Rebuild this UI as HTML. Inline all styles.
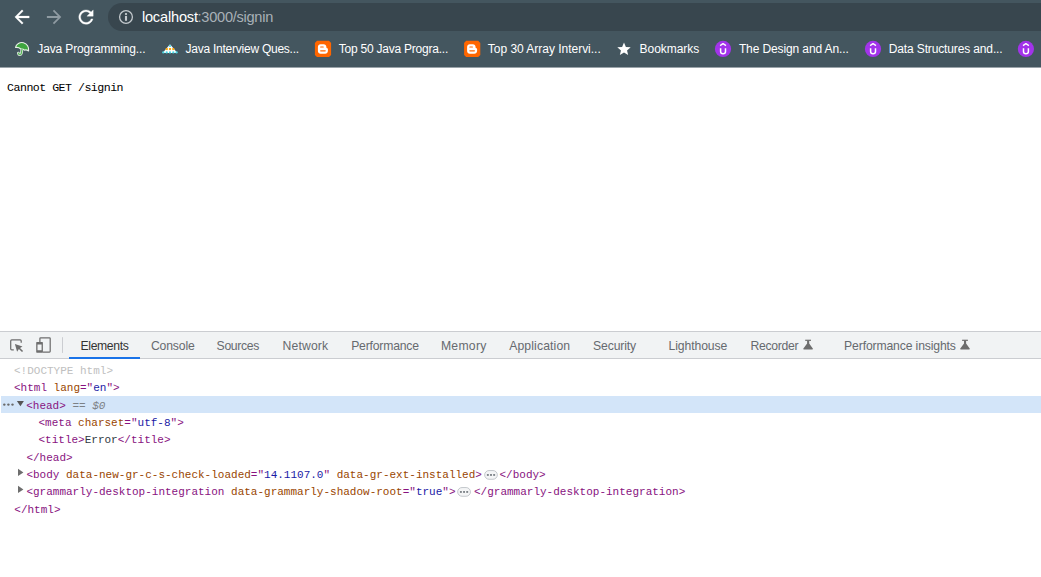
<!DOCTYPE html>
<html lang="en">
<head>
<meta charset="utf-8">
<title>Error</title>
<style>
html,body{margin:0;padding:0;background:#fff;}
body{width:1041px;height:577px;position:relative;overflow:hidden;font-family:"Liberation Sans",sans-serif;}
.abs{position:absolute;}
.t{position:absolute;white-space:pre;height:16px;line-height:16px;font-family:"Liberation Sans",sans-serif;}
.m{position:absolute;white-space:pre;height:16px;line-height:16px;font-family:"Liberation Mono",monospace;font-size:11px;}
#chrome{position:absolute;left:0;top:0;width:1041px;height:67px;background:#44565f;}
#chromeline{position:absolute;left:0;top:67px;width:1041px;height:1px;background:#9aa3a9;}
#omni{position:absolute;left:108px;top:3px;width:960px;height:28px;border-radius:14px;background:#38464e;}
#pagetext{position:absolute;left:7.1px;top:80.1px;height:16px;line-height:16px;white-space:pre;font-family:"Liberation Mono",monospace;font-size:11.6px;letter-spacing:-0.517px;color:#000;}
#dtborder{position:absolute;left:0;top:331px;width:1041px;height:1px;background:#cbcdd1;}
#dttabs{position:absolute;left:0;top:332px;width:1041px;height:26px;background:#f1f3f4;}
#dttabsline{position:absolute;left:0;top:358px;width:1041px;height:1px;background:#cbcdd1;}
#tabsel{position:absolute;left:69px;top:357px;width:71px;height:2px;background:#1a73e8;}
#rowsel{position:absolute;left:1px;top:396px;width:1040px;height:17px;background:#d3e5f9;}
svg{position:absolute;left:0;top:0;overflow:visible;}
</style>
</head>
<body>
<div id="chrome"></div>
<div id="chromeline"></div>
<div id="omni"></div>
<div id="pagetext">Cannot GET /signin</div>
<div id="dtborder"></div>
<div id="dttabs"></div>
<div id="dttabsline"></div>
<div id="tabsel"></div>
<div id="rowsel"></div>

<svg width="1041" height="577" viewBox="0 0 1041 577">
  <!-- nav icons -->
  <g transform="translate(11.2,6.2) scale(0.9)" fill="#ffffff" stroke="#ffffff" stroke-width="0.3"><path d="M20 11H7.83l5.59-5.59L12 4l-8 8 8 8 1.41-1.41L7.83 13H20v-2z"/></g>
  <g transform="translate(43.3,6.2) scale(0.9)" fill="#8f9ba2"><path d="M12 4l-1.41 1.41L16.17 11H4v2h12.17l-5.58 5.59L12 20l8-8z"/></g>
  <g transform="translate(75.2,6.3) scale(0.9)" fill="#ffffff" stroke="#ffffff" stroke-width="0.35"><path d="M17.65 6.35C16.2 4.9 14.21 4 12 4c-4.42 0-7.99 3.58-7.99 8s3.57 8 7.99 8c3.73 0 6.84-2.55 7.73-6h-2.08c-.82 2.33-3.04 4-5.65 4-3.31 0-6-2.69-6-6s2.69-6 6-6c1.66 0 3.14.69 4.22 1.78L13 11h7V4l-2.35 2.35z"/></g>
  <!-- info icon -->
  <circle cx="126" cy="17" r="6.4" fill="none" stroke="#c3c9cd" stroke-width="1.3"/>
  <rect x="124.95" y="15.9" width="2.1" height="4.9" fill="#c3c9cd"/>
  <rect x="124.95" y="13.1" width="2.1" height="1.8" fill="#c3c9cd"/>

  <!-- umbrella -->
  <g transform="translate(0,0.3)">
    <path d="M22 48.7 L21.4 52.8 C21.1 54.7 18.7 54.8 18.4 52.9" fill="none" stroke="#e8efe8" stroke-width="2.8" stroke-linecap="round"/>
    <path d="M15.5 47.2 C16 43.6 20 41.6 23.5 42.4 C27 43.3 29.2 47 28.6 50.7 C27 49.6 25.5 49.4 24.5 49.9 C23.6 48.9 22 48.4 20.8 48.7 C19.5 47.5 17 46.9 15.5 47.2 Z" fill="#3fa53f" stroke="#e8efe8" stroke-width="1.1" stroke-linejoin="round"/>
    <path d="M22 48.7 L21.4 52.8 C21.1 54.7 18.7 54.8 18.4 52.9" fill="none" stroke="#5db85d" stroke-width="1.3" stroke-linecap="round"/>
  </g>
  <!-- triangle dots icon -->
  <g>
    <path d="M170 44.2 L177.4 53 L162.6 53 Z" fill="#ffffff"/>
    <g fill="#4dd9e6">
      <circle cx="170" cy="46" r="1.1"/>
      <circle cx="163.3" cy="52.4" r="1.15"/><circle cx="166.7" cy="52.4" r="1.15"/><circle cx="170" cy="52.4" r="1.15"/><circle cx="173.3" cy="52.4" r="1.15"/><circle cx="176.6" cy="52.4" r="1.15"/>
    </g>
    <g fill="#fbab18">
      <rect x="165.7" y="48" width="2.1" height="2.1"/><rect x="168.95" y="48" width="2.1" height="2.1"/><rect x="172.2" y="48" width="2.1" height="2.1"/>
    </g>
  </g>
  <!-- blogger icons -->
  <g>
    <path d="M317 40.8 H329 L331.1 42.9 V55 L329 57.1 H317 L314.9 55 V42.9 Z" fill="#ff6600"/>
    <path fill-rule="evenodd" fill="#ffffff" d="M320.6 44.2 H323.6 C325.3 44.2 326.4 45.4 326.4 47 V47.6 C326.4 48.1 326.7 48.3 327.2 48.3 C327.7 48.3 327.9 48.6 327.9 49 V51 C327.9 52.6 326.7 53.8 325.1 53.8 H320.6 C319 53.8 317.9 52.6 317.9 51 V47 C317.9 45.4 319 44.2 320.6 44.2 Z M320.7 46.4 H323.2 C324 46.4 324 47.6 323.2 47.6 H320.7 C319.9 47.6 319.9 46.4 320.7 46.4 Z M320.7 50.3 H325.2 C326 50.3 326 51.5 325.2 51.5 H320.7 C319.9 51.5 319.9 50.3 320.7 50.3 Z"/>
  </g>
  <g transform="translate(149.2,0)">
    <path d="M317 40.8 H329 L331.1 42.9 V55 L329 57.1 H317 L314.9 55 V42.9 Z" fill="#ff6600"/>
    <path fill-rule="evenodd" fill="#ffffff" d="M320.6 44.2 H323.6 C325.3 44.2 326.4 45.4 326.4 47 V47.6 C326.4 48.1 326.7 48.3 327.2 48.3 C327.7 48.3 327.9 48.6 327.9 49 V51 C327.9 52.6 326.7 53.8 325.1 53.8 H320.6 C319 53.8 317.9 52.6 317.9 51 V47 C317.9 45.4 319 44.2 320.6 44.2 Z M320.7 46.4 H323.2 C324 46.4 324 47.6 323.2 47.6 H320.7 C319.9 47.6 319.9 46.4 320.7 46.4 Z M320.7 50.3 H325.2 C326 50.3 326 51.5 325.2 51.5 H320.7 C319.9 51.5 319.9 50.3 320.7 50.3 Z"/>
  </g>
  <!-- star -->
  <g transform="translate(615.96,41.3) scale(0.67,0.655)" fill="#ffffff"><path d="M12 17.27L18.18 21l-1.64-7.03L22 9.24l-7.19-.61L12 2 9.19 8.63 2 9.24l5.46 4.73L5.82 21z"/></g>
  <!-- purple U icons -->
  <g>
    <circle cx="723" cy="48.9" r="8.1" fill="#a233ea"/>
    <path d="M720.6 48.2 V51.6 C720.6 54.6 725.5 54.6 725.5 51.6 V48.2" fill="none" stroke="#ffffff" stroke-width="1.5"/>
    <path d="M720.1 45.6 L723 43.6 L726 45.6" fill="none" stroke="#ffffff" stroke-width="1.3" stroke-linejoin="round"/>
  </g>
  <g transform="translate(150,0)">
    <circle cx="723" cy="48.9" r="8.1" fill="#a233ea"/>
    <path d="M720.6 48.2 V51.6 C720.6 54.6 725.5 54.6 725.5 51.6 V48.2" fill="none" stroke="#ffffff" stroke-width="1.5"/>
    <path d="M720.1 45.6 L723 43.6 L726 45.6" fill="none" stroke="#ffffff" stroke-width="1.3" stroke-linejoin="round"/>
  </g>
  <g transform="translate(302.9,0)">
    <circle cx="723" cy="48.9" r="8.1" fill="#a233ea"/>
    <path d="M720.6 48.2 V51.6 C720.6 54.6 725.5 54.6 725.5 51.6 V48.2" fill="none" stroke="#ffffff" stroke-width="1.5"/>
    <path d="M720.1 45.6 L723 43.6 L726 45.6" fill="none" stroke="#ffffff" stroke-width="1.3" stroke-linejoin="round"/>
  </g>

  <!-- devtools icons -->
  <g fill="none" stroke="#6e6e6e" stroke-width="1.25">
    <path d="M13.8 349.8 H11.7 C11.1 349.8 10.7 349.4 10.7 348.8 V340.9 C10.7 340.3 11.1 339.9 11.7 339.9 H20.2 C20.8 339.9 21.2 340.3 21.2 340.9 V342.8"/>
    <path d="M39.9 342.3 V338.5 C39.9 338 40.1 337.8 40.6 337.8 H49.5 C50 337.8 50.2 338 50.2 338.5 V351.3 C50.2 351.8 50 352 49.5 352 H42.6"/>
  </g>
  <path d="M14.9 343.9 L22.5 346.4 L20 347.9 L23.1 351 L22 352.1 L18.9 349 L17.1 351.7 Z" fill="#6e6e6e"/>
  <path fill-rule="evenodd" d="M36.8 342.1 H42.3 C42.7 342.1 42.9 342.3 42.9 342.7 V352.1 C42.9 352.5 42.7 352.7 42.3 352.7 H36.8 C36.4 352.7 36.2 352.5 36.2 352.1 V342.7 C36.2 342.3 36.4 342.1 36.8 342.1 Z M37.5 344.4 H41.6 V350.3 H37.5 Z" fill="#6e6e6e"/>
  <rect x="62" y="337.2" width="1" height="15.7" fill="#cbcdd1"/>

  <!-- flasks -->
  <g fill="#6e6e6e">
    <rect x="805.2" y="339.7" width="5.8" height="1.2"/>
    <path d="M807.1 340.5 H809.2 V343.6 L812.8 348.6 C813.1 349.1 812.9 349.4 812.4 349.4 H803.8 C803.3 349.4 803.1 349.1 803.4 348.6 L807.1 343.6 Z"/>
  </g>
  <g transform="translate(156.9,0)" fill="#6e6e6e">
    <rect x="805.2" y="339.7" width="5.8" height="1.2"/>
    <path d="M807.1 340.5 H809.2 V343.6 L812.8 348.6 C813.1 349.1 812.9 349.4 812.4 349.4 H803.8 C803.3 349.4 803.1 349.1 803.4 348.6 L807.1 343.6 Z"/>
  </g>

  <!-- tree decorations -->
  <g fill="#6a6a6a">
    <circle cx="4.3" cy="404.6" r="1.2"/><circle cx="8.4" cy="404.6" r="1.2"/><circle cx="12.5" cy="404.6" r="1.2"/>
  </g>
  <path d="M16.9 401 H23.9 L20.4 406.2 Z" fill="#555555"/>
  <path d="M18 468.8 V476 L23.4 472.4 Z" fill="#6e6e6e"/>
  <path d="M18 485.8 V493 L23.4 489.4 Z" fill="#6e6e6e"/>
  <!-- ellipsis badges -->
  <g>
    <rect x="484.65" y="470.55" width="12.7" height="8.7" rx="4.35" fill="#f4f5f6" stroke="#c4c8cc" stroke-width="1"/>
    <g fill="#80868b"><rect x="486.9" y="474" width="1.9" height="1.9"/><rect x="490.05" y="474" width="1.9" height="1.9"/><rect x="493.2" y="474" width="1.9" height="1.9"/></g>
    <rect x="457.65" y="487.55" width="12.8" height="8.7" rx="4.35" fill="#f4f5f6" stroke="#c4c8cc" stroke-width="1"/>
    <g fill="#80868b"><rect x="459.95" y="491" width="1.9" height="1.9"/><rect x="463.1" y="491" width="1.9" height="1.9"/><rect x="466.25" y="491" width="1.9" height="1.9"/></g>
  </g>
</svg>

<div class="t" style="left:37.30px;top:40.84px;font-size:12.0px;letter-spacing:-0.138px;color:#ffffff;">Java Programming...</div>
<div class="t" style="left:185.50px;top:40.84px;font-size:12.0px;letter-spacing:-0.242px;color:#ffffff;">Java Interview Ques...</div>
<div class="t" style="left:338.80px;top:40.84px;font-size:12.0px;letter-spacing:-0.232px;color:#ffffff;">Top 50 Java Progra...</div>
<div class="t" style="left:487.80px;top:40.84px;font-size:12.0px;letter-spacing:-0.021px;color:#ffffff;">Top 30 Array Intervi...</div>
<div class="t" style="left:639.60px;top:40.84px;font-size:12.0px;letter-spacing:-0.048px;color:#ffffff;">Bookmarks</div>
<div class="t" style="left:738.90px;top:40.84px;font-size:12.0px;letter-spacing:-0.114px;color:#ffffff;">The Design and An...</div>
<div class="t" style="left:888.80px;top:40.84px;font-size:12.0px;letter-spacing:-0.138px;color:#ffffff;">Data Structures and...</div>
<div class="t" style="left:141.90px;top:8.94px;font-size:14.6px;letter-spacing:-0.190px;color:#ffffff;">localhost</div>
<div class="t" style="left:197.60px;top:8.94px;font-size:14.6px;letter-spacing:-0.277px;color:#a8b1b7;">:3000/signin</div>
<div class="t" style="left:80.60px;top:337.97px;font-size:12.2px;letter-spacing:-0.377px;color:#333333;">Elements</div>
<div class="t" style="left:150.90px;top:337.97px;font-size:12.2px;letter-spacing:-0.146px;color:#666a6f;">Console</div>
<div class="t" style="left:216.60px;top:337.97px;font-size:12.2px;letter-spacing:-0.317px;color:#666a6f;">Sources</div>
<div class="t" style="left:282.60px;top:337.97px;font-size:12.2px;letter-spacing:0.142px;color:#666a6f;">Network</div>
<div class="t" style="left:351.20px;top:337.97px;font-size:12.2px;letter-spacing:-0.198px;color:#666a6f;">Performance</div>
<div class="t" style="left:440.90px;top:337.97px;font-size:12.2px;letter-spacing:0.281px;color:#666a6f;">Memory</div>
<div class="t" style="left:509.20px;top:337.97px;font-size:12.2px;letter-spacing:0.125px;color:#666a6f;">Application</div>
<div class="t" style="left:593.10px;top:337.97px;font-size:12.2px;letter-spacing:-0.154px;color:#666a6f;">Security</div>
<div class="t" style="left:668.60px;top:337.97px;font-size:12.2px;letter-spacing:-0.104px;color:#666a6f;">Lighthouse</div>
<div class="t" style="left:750.40px;top:337.97px;font-size:12.2px;letter-spacing:-0.291px;color:#666a6f;">Recorder</div>
<div class="t" style="left:844.10px;top:337.97px;font-size:12.2px;letter-spacing:-0.139px;color:#666a6f;">Performance insights</div>
<div class="m" style="left:14.00px;top:363.27px"><span style="color:#c0c0c0">&lt;!DOCTYPE html&gt;</span></div>
<div class="m" style="left:14.00px;top:380.27px"><span style="color:#881280">&lt;html </span><span style="color:#994500">lang</span><span style="color:#881280">=&quot;</span><span style="color:#1a1aa6">en</span><span style="color:#881280">&quot;&gt;</span></div>
<div class="m" style="left:26.20px;top:398.27px"><span style="color:#881280">&lt;head&gt;</span><span style="color:#7d8186"> == </span><span style="color:#7d8186;font-style:italic">$0</span></div>
<div class="m" style="left:38.50px;top:415.27px"><span style="color:#881280">&lt;meta </span><span style="color:#994500">charset</span><span style="color:#881280">=&quot;</span><span style="color:#1a1aa6">utf-8</span><span style="color:#881280">&quot;&gt;</span></div>
<div class="m" style="left:38.50px;top:432.27px"><span style="color:#881280">&lt;title&gt;</span><span style="color:#303942">Error</span><span style="color:#881280">&lt;/title&gt;</span></div>
<div class="m" style="left:26.40px;top:450.27px"><span style="color:#881280">&lt;/head&gt;</span></div>
<div class="m" style="left:26.40px;top:467.27px"><span style="color:#881280">&lt;body </span><span style="color:#994500">data-new-gr-c-s-check-loaded</span><span style="color:#881280">=&quot;</span><span style="color:#1a1aa6">14.1107.0</span><span style="color:#881280">&quot; </span><span style="color:#994500">data-gr-ext-installed</span><span style="color:#881280">&gt;</span></div>
<div class="m" style="left:499.50px;top:467.27px"><span style="color:#881280">&lt;/body&gt;</span></div>
<div class="m" style="left:26.40px;top:484.27px"><span style="color:#881280">&lt;grammarly-desktop-integration </span><span style="color:#994500">data-grammarly-shadow-root</span><span style="color:#881280">=&quot;</span><span style="color:#1a1aa6">true</span><span style="color:#881280">&quot;&gt;</span></div>
<div class="m" style="left:474.00px;top:484.27px"><span style="color:#881280">&lt;/grammarly-desktop-integration&gt;</span></div>
<div class="m" style="left:14.30px;top:502.27px"><span style="color:#881280">&lt;/html&gt;</span></div>
</body>
</html>
